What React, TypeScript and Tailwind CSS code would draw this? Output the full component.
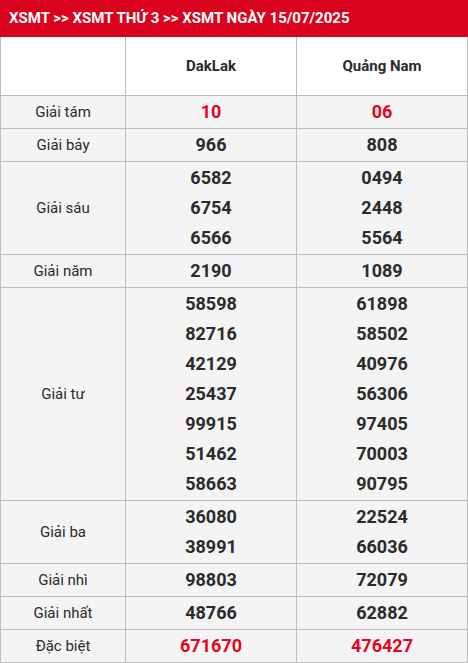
import React from "react";

type Row = { label: string; a: string[]; b: string[]; red?: boolean };

const rows: Row[] = [
  { label: "Giải tám", a: ["10"], b: ["06"], red: true },
  { label: "Giải bảy", a: ["966"], b: ["808"] },
  { label: "Giải sáu", a: ["6582", "6754", "6566"], b: ["0494", "2448", "5564"] },
  { label: "Giải năm", a: ["2190"], b: ["1089"] },
  {
    label: "Giải tư",
    a: ["58598", "82716", "42129", "25437", "99915", "51462", "58663"],
    b: ["61898", "58502", "40976", "56306", "97405", "70003", "90795"],
  },
  { label: "Giải ba", a: ["36080", "38991"], b: ["22524", "66036"] },
  { label: "Giải nhì", a: ["98803"], b: ["72079"] },
  { label: "Giải nhất", a: ["48766"], b: ["62882"] },
  { label: "Đặc biệt", a: ["671670"], b: ["476427"], red: true },
];

function Nums({ list, red }: { list: string[]; red?: boolean }) {
  return (
    <div className="w-[171px] border-r border-[#bdbdbd] py-px flex flex-col items-center justify-center">
      {list.map((n, i) => (
        <div
          key={i}
          className={`h-[30px] leading-[30px] text-[18px] font-bold ${red ? "text-[#e0061f]" : "text-[#2b2b2b]"}`}
        >
          {n}
        </div>
      ))}
    </div>
  );
}

export default function App() {
  return (
    <div className="w-[468px] bg-white" style={{ fontFamily: "Roboto, 'Noto Sans', sans-serif" }}>
      <div className="h-[37px] bg-[#d9031d] px-[9px] flex items-center text-white font-bold text-[15px]">
        XSMT &gt;&gt; XSMT THỨ 3 &gt;&gt; XSMT NGÀY 15/07/2025
      </div>
      <div className="flex h-[59px] bg-white border-b border-l border-[#bdbdbd]">
        <div className="w-[125px] border-r border-[#bdbdbd]"></div>
        <div className="w-[171px] border-r border-[#bdbdbd] flex items-center justify-center text-[15px] font-bold text-[#2b2b2b]">
          DakLak
        </div>
        <div className="w-[171px] border-r border-[#bdbdbd] flex items-center justify-center text-[15px] font-bold text-[#2b2b2b]">
          Quảng Nam
        </div>
      </div>
      {rows.map((r) => (
        <div key={r.label} className="flex bg-[#f4f4f4] border-b border-l border-[#bdbdbd]">
          <div className="w-[125px] border-r border-[#bdbdbd] flex items-center justify-center text-[15px] text-[#2b2b2b]">
            {r.label}
          </div>
          <Nums list={r.a} red={r.red} />
          <Nums list={r.b} red={r.red} />
        </div>
      ))}
    </div>
  );
}
